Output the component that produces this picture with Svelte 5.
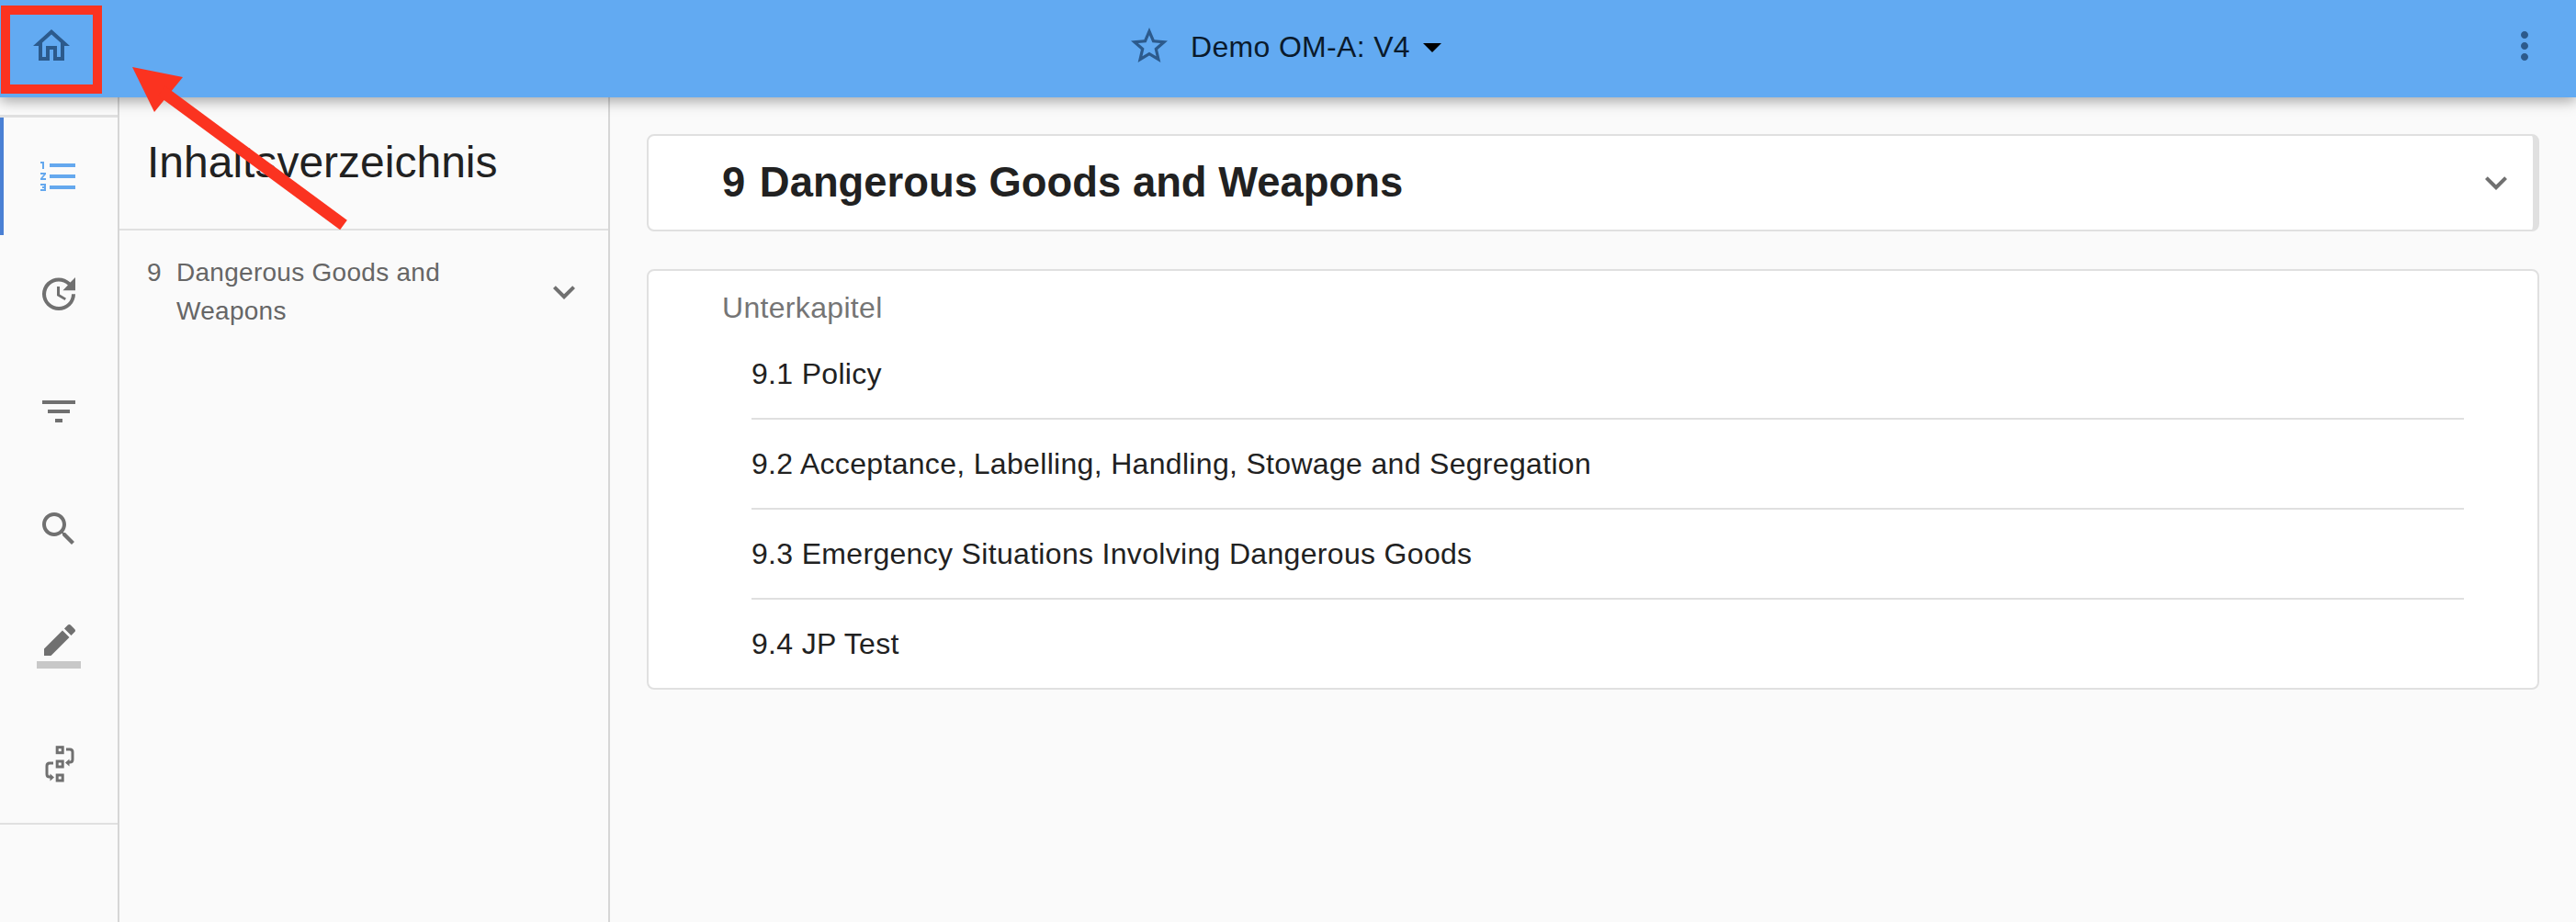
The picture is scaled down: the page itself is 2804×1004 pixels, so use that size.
<script lang="ts">
  const railIcons = [
    { id: "toc", active: true, d: "M2 17h2v.5H3v1h1v.5H2v1h3v-4H2v1zm1-9h1V4H2v1h1v3zm-1 3h1.8L2 13.1v.9h3v-1H3.2L5 10.9V10H2v1zm5-6v2h14V5H7zm0 14h14v-2H7v2zm0-6h14v-2H7v2z" },
    { id: "history", d: "M21 10.12h-6.78l2.74-2.82c-2.73-2.7-7.15-2.8-9.88-.1-2.73 2.71-2.73 7.08 0 9.79s7.15 2.71 9.88 0C18.32 15.65 19 14.08 19 12.1h2c0 1.98-.88 4.55-2.64 6.29-3.51 3.48-9.21 3.48-12.72 0-3.5-3.47-3.53-9.11-.02-12.58s9.14-3.47 12.65 0L21 3v7.12zM12.5 8v4.25l3.5 2.08-.72 1.21L11 13V8h1.5z" },
    { id: "filter", d: "M10 18h4v-2h-4v2zM3 6v2h18V6H3zm3 7h12v-2H6v2z" },
    { id: "search", d: "M15.5 14h-.79l-.28-.27C15.41 12.59 16 11.11 16 9.5 16 5.91 13.09 3 9.5 3S3 5.91 3 9.5 5.91 16 9.5 16c1.61 0 3.09-.59 4.23-1.57l.27.28v.79l5 4.99L20.49 19l-4.99-5zm-6 0C7.01 14 5 11.99 5 9.5S7.01 5 9.5 5 14 7.01 14 9.5 11.99 14 9.5 14z" },
  ];

  const chapters = [
    "9.1 Policy",
    "9.2 Acceptance, Labelling, Handling, Stowage and Segregation",
    "9.3 Emergency Situations Involving Dangerous Goods",
    "9.4 JP Test",
  ];

  const chevron = "M16.59 8.59L12 13.17 7.41 8.59 6 10l6 6 6-6z";
</script>

<div class="page">
  <header class="topbar">
    <button type="button" class="topbar__btn" aria-label="Home">
      <svg viewBox="0 0 24 24" width="48" height="48"><path d="M12 5.69l5 4.5V18h-2v-6H9v6H7v-7.81l5-4.5M12 3L2 12h3v8h6v-6h2v6h6v-8h3L12 3z" /></svg>
    </button>
    <div class="topbar__title">
      <svg class="topbar__star" viewBox="0 0 24 24" width="48" height="48"><path d="M22 9.24l-7.19-.62L12 2 9.19 8.63 2 9.24l5.46 4.73L5.82 21 12 17.27 18.18 21l-1.63-7.03L22 9.24zM12 15.4l-3.76 2.27 1-4.28-3.32-2.88 4.38-.38L12 6.1l1.71 4.04 4.38.38-3.32 2.88 1 4.28L12 15.4z" /></svg>
      <span class="topbar__name">Demo OM-A: V4</span>
      <span class="topbar__caret"></span>
    </div>
    <button type="button" class="topbar__btn" aria-label="Menu">
      <svg viewBox="0 0 24 24" width="48" height="48"><path d="M12 8c1.1 0 2-.9 2-2s-.9-2-2-2-2 .9-2 2 .9 2 2 2zm0 2c-1.1 0-2 .9-2 2s.9 2 2 2 2-.9 2-2-.9-2-2-2zm0 6c-1.1 0-2 .9-2 2s.9 2 2 2 2-.9 2-2-.9-2-2-2z" /></svg>
    </button>
  </header>

  <div class="body">
    <nav class="rail">
      <div class="rail__list">
        {#each railIcons as icon}
          <div class="rail__item" class:rail__item--active={icon.active}>
            <svg viewBox="0 0 24 24" width="48" height="48"><path d={icon.d} /></svg>
          </div>
        {/each}
        <div class="rail__item">
          <svg viewBox="0 0 24 24" width="48" height="48">
            <path d="M17.75 7L14 3.25l-10 10V17h3.75l10-10zm2.96-2.96c.39-.39.39-1.02 0-1.41L18.37.29c-.39-.39-1.02-.39-1.41 0L15 2.25 18.75 6l1.96-1.96z" />
            <path fill-opacity=".36" d="M0 20h24v4H0z" />
          </svg>
        </div>
        <div class="rail__item">
          <svg viewBox="0 0 48 48" width="48" height="48">
            <g class="flow">
              <rect x="22.2" y="5.7" width="6" height="6" />
              <rect x="22.2" y="21" width="6" height="6" />
              <rect x="22.2" y="36" width="6" height="6" />
              <path d="M32 8h4q3 0 3 3v8q0 3-3 3h-1" />
              <path d="M18 23h-4q-3 0-3 3v9q0 3 3 3h1" />
            </g>
            <path class="flow__head" d="M31 22.5l4.5-4v8z" />
            <path class="flow__head" d="M19 38.5l-4.5-4v8z" />
          </svg>
        </div>
      </div>
    </nav>

    <aside class="toc">
      <h2 class="toc__title">Inhaltsverzeichnis</h2>
      <div class="toc__entry">
        <span class="toc__num">9</span>
        <span class="toc__label">Dangerous Goods and Weapons</span>
        <svg class="toc__chevron" viewBox="0 0 24 24" width="48" height="48"><path d={chevron} /></svg>
      </div>
    </aside>

    <main class="content">
      <section class="card card--head">
        <h1 class="card__title"><span class="card__num">9</span> Dangerous Goods and Weapons</h1>
        <svg class="card__chevron" viewBox="0 0 24 24" width="48" height="48"><path d={chevron} /></svg>
      </section>

      <section class="card">
        <div class="card__label">Unterkapitel</div>
        <ul class="chapters">
          {#each chapters as chapter}
            <li class="chapters__row">{chapter}</li>
          {/each}
        </ul>
      </section>
    </main>
  </div>

  <!-- screenshot annotation drawn over the page -->
  <svg class="markup" width="400" height="260" viewBox="0 0 400 260">
    <rect x="6" y="11" width="100" height="86" fill="none" stroke="#fb3320" stroke-width="10" />
    <path d="M144 73L199 84 168 122z" fill="#fb3320" />
    <path d="M176 99L374 245" stroke="#fb3320" stroke-width="13" fill="none" />
  </svg>
</div>

<style>
  :global(body) {
    margin: 0;
    background: #fafafa;
  }

  .page {
    position: relative;
    width: 2804px;
    height: 1004px;
    display: flex;
    flex-direction: column;
    overflow: hidden;
    font-family: "Liberation Sans", Arial, sans-serif;
    background: #fafafa;
  }

  .topbar {
    position: relative;
    z-index: 2;
    flex: none;
    height: 106px;
    box-sizing: border-box;
    padding: 0 32px 6px;
    display: grid;
    grid-template-columns: 1fr auto 1fr;
    align-items: center;
    background: #62aaf2;
    box-shadow: 0 4px 14px rgba(0, 0, 0, 0.35);
  }

  .topbar__btn {
    width: 48px;
    height: 48px;
    padding: 0;
    border: 0;
    background: none;
  }

  .topbar__btn:last-child {
    justify-self: end;
  }

  .topbar__btn svg,
  .topbar__star {
    display: block;
    fill: #2c5a8c;
  }

  .topbar__title {
    display: flex;
    align-items: center;
    padding-right: 8px;
  }

  .topbar__name {
    margin: 3px 0 0 21px;
    font-size: 32px;
    letter-spacing: 0.01em;
    color: #0a1a2c;
  }

  .topbar__caret {
    margin: 4px 0 0 14px;
    border-left: 10px solid transparent;
    border-right: 10px solid transparent;
    border-top: 10px solid #000;
  }

  .body {
    flex: 1;
    display: flex;
    min-height: 0;
  }

  .rail {
    flex: none;
    width: 130px;
    box-sizing: border-box;
    padding-top: 19px;
    border-right: 2px solid #d6d6d6;
  }

  .rail__list {
    border-top: 3px solid #e0e0e0;
    border-bottom: 2px solid #e0e0e0;
  }

  .rail__item {
    height: 128px;
    display: flex;
    align-items: center;
    justify-content: center;
    box-sizing: border-box;
    fill: #707070;
  }

  .rail__item--active {
    border-left: 4px solid #4a80d4;
    padding-right: 4px;
    fill: #64a8ee;
  }

  .flow {
    fill: none;
    stroke: #707070;
    stroke-width: 3;
  }

  .flow__head {
    fill: #707070;
  }

  .toc {
    flex: none;
    width: 534px;
    box-sizing: border-box;
    border-right: 2px solid #d6d6d6;
  }

  .toc__title {
    height: 145px;
    box-sizing: border-box;
    margin: 0;
    padding: 43px 0 0 30px;
    border-bottom: 2px solid #e0e0e0;
    font-size: 48px;
    line-height: 56px;
    font-weight: 400;
    color: #212121;
  }

  .toc__entry {
    display: flex;
    align-items: center;
    padding: 25px 24px 0 30px;
    font-size: 28px;
    letter-spacing: 0.01em;
    line-height: 42px;
    color: #666;
  }

  .toc__num {
    align-self: flex-start;
    width: 32px;
    flex: none;
  }

  .toc__label {
    flex: 1;
  }

  .toc__chevron {
    flex: none;
    fill: #707070;
  }

  .content {
    flex: 1;
    min-width: 0;
    box-sizing: border-box;
    padding: 40px 40px 0 40px;
    display: flex;
    flex-direction: column;
    gap: 41px;
  }

  .card {
    box-sizing: border-box;
    border: 2px solid #e0e0e0;
    border-radius: 8px;
    background: #fff;
  }

  .card--head {
    height: 106px;
    display: flex;
    align-items: center;
    justify-content: space-between;
    padding: 0 16px 0 80px;
    border-right-width: 7px;
  }

  .card__title {
    margin: 0;
    font-size: 45.4px;
    font-weight: 700;
    color: #212121;
  }

  .card__num {
    margin-right: 3px;
  }

  .card__chevron {
    fill: #707070;
  }

  .card__label {
    height: 64px;
    box-sizing: border-box;
    padding: 24px 0 0 80px;
    font-size: 32px;
    letter-spacing: 0.01em;
    line-height: 32px;
    color: #757575;
  }

  .chapters {
    list-style: none;
    margin: 0 80px 0 112px;
    padding: 0;
  }

  .chapters__row {
    height: 98px;
    box-sizing: border-box;
    display: flex;
    align-items: center;
    border-bottom: 2px solid #e0e0e0;
    font-size: 32px;
    letter-spacing: 0.01em;
    color: #212121;
  }

  .chapters__row:last-child {
    height: 96px;
    border-bottom: 0;
  }

  .markup {
    position: absolute;
    top: 0;
    left: 0;
    z-index: 3;
    pointer-events: none;
  }
</style>
